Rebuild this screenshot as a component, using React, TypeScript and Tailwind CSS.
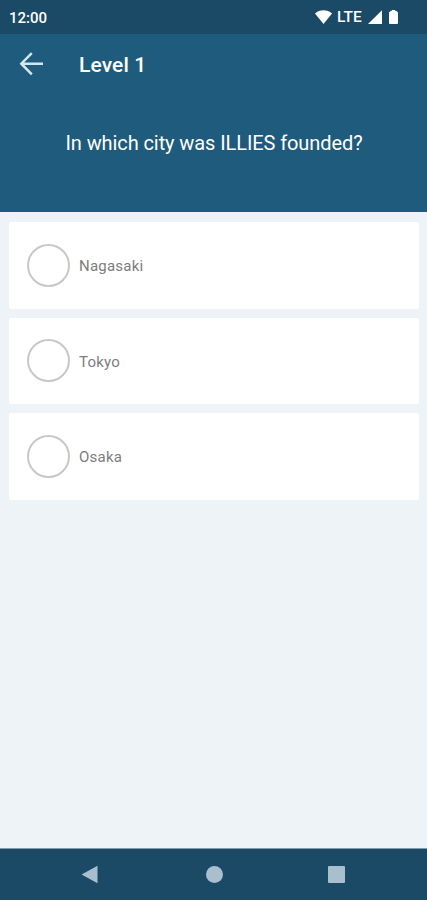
import { useState } from "react";
import { clsx } from "clsx";

type Question = {
  level: number;
  text: string;
  answers: string[];
};

const QUESTION: Question = {
  level: 1,
  text: "In which city was ILLIES founded?",
  answers: ["Nagasaki", "Tokyo", "Osaka"],
};

function StatusBar() {
  return (
    <div className="flex h-[34px] shrink-0 items-center justify-between bg-[#1b4a66] pr-[29px] pl-[9px] text-white">
      <span className="mt-0.5 text-[15px] leading-none font-medium">12:00</span>
      <div className="flex items-center">
        <svg className="h-[14px] w-[17px]" viewBox="0 0 17 14" fill="currentColor">
          <path d="M0 3.4C4.8-.8 12.2-.8 17 3.4L8.5 14z" />
        </svg>
        <span className="mt-0.5 ml-[5px] w-[27px] text-[15.5px] leading-none font-medium">LTE</span>
        <svg className="ml-[4px] h-[14px] w-[14px]" viewBox="0 0 14 14" fill="currentColor">
          <path d="M14 .3V14H0z" />
        </svg>
        <svg className="ml-[7px] h-[14px] w-[9px]" viewBox="0 0 9 14" fill="currentColor">
          <path d="M2.7 0h3.6v1h1.1L9 2.6V13a1 1 0 0 1-1 1H1a1 1 0 0 1-1-1V2.6L1.6 1h1.1z" />
        </svg>
      </div>
    </div>
  );
}

function NavBar() {
  return (
    <nav className="flex h-[52px] shrink-0 items-center border-t border-[#7f9ba8] bg-[#1a4a66] pl-[81px] text-[#a9bfce]">
      <button aria-label="Back">
        <svg className="h-[19px] w-[17px]" viewBox="0 0 17 19" fill="currentColor">
          <path d="M16.5.8v17.4L.6 9.5z" />
        </svg>
      </button>
      <button aria-label="Home" className="ml-[107.5px] h-[17px] w-[17px] rounded-full bg-[#a9bfce]" />
      <button aria-label="Recents" className="ml-[105.5px] h-[17px] w-[17px] rounded-[1px] bg-[#a9bfce]" />
    </nav>
  );
}

export default function App() {
  const [selected, setSelected] = useState<number | null>(null);

  return (
    <div className="flex h-[900px] w-full flex-col overflow-hidden bg-[#eef3f8] font-[Roboto,sans-serif]">
      <StatusBar />

      {/* Question header */}
      <header className="h-[178px] shrink-0 bg-[#1e5b7c] text-white">
        <div className="flex h-[60px] items-center pl-[19px]">
          <button aria-label="Go back" className="text-[#d3e6f1]">
            <svg className="h-6 w-6" viewBox="0 0 24 24" fill="none" stroke="currentColor" strokeWidth="2.5">
              <path d="M24 11.7H2.4M12.8 1.2 2.3 11.7l10.5 10.6" />
            </svg>
          </button>
          <h1 className="mt-0.5 ml-9 text-[21px] leading-none font-medium tracking-[0.12px]">
            Level {QUESTION.level}
          </h1>
        </div>
        <p className="mt-[37px] pl-px text-center text-[20px] leading-6 tracking-[-0.09px]">{QUESTION.text}</p>
      </header>

      {/* Answers */}
      <main className="flex flex-1 flex-col gap-[9px] pt-[10px] pr-2 pl-[9px]">
        {QUESTION.answers.map((answer, i) => (
          <button
            key={answer}
            onClick={() => setSelected(i)}
            className="flex h-[86.5px] items-center rounded-[2px] bg-white pl-[18px] text-left"
          >
            <span
              className={clsx(
                "h-[43px] w-[43px] rounded-full border-2",
                selected === i ? "border-[#1e5b7c] bg-[#1e5b7c]" : "border-[#cac7c7]"
              )}
            />
            <span className="mt-0.5 ml-[9px] text-[15px] tracking-[0.22px] text-[#7d7d7d]">{answer}</span>
          </button>
        ))}
      </main>

      <NavBar />
    </div>
  );
}
